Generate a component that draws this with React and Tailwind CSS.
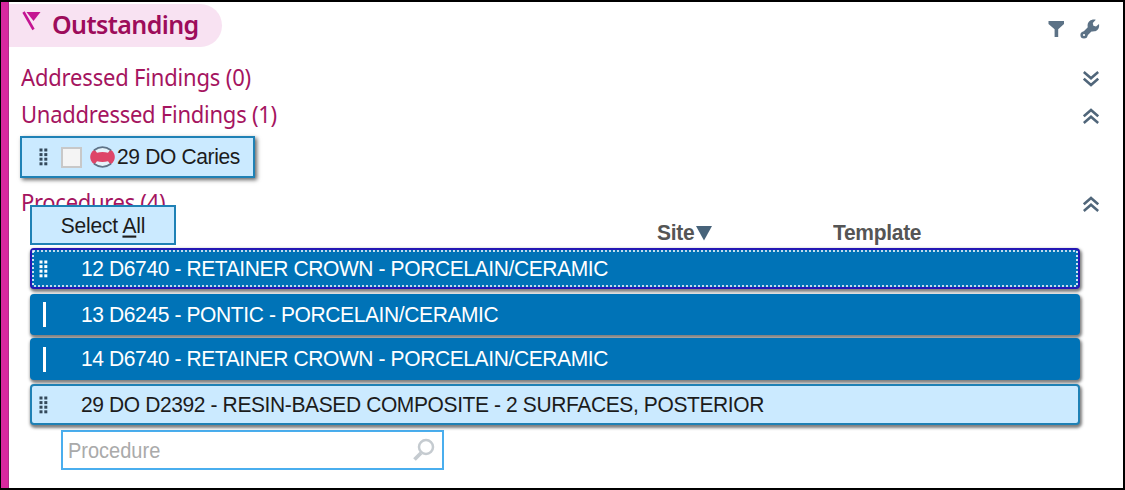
import React from "react";

const procedures = [
  { label: "12 D6740 - RETAINER CROWN - PORCELAIN/CERAMIC", state: "focused", handle: "grip", box: "h-[41px] mb-[5px]" },
  { label: "13 D6245 - PONTIC - PORCELAIN/CERAMIC", state: "selected", handle: "bar", box: "h-[41px] mb-[3px]" },
  { label: "14 D6740 - RETAINER CROWN - PORCELAIN/CERAMIC", state: "selected", handle: "bar", box: "h-[42px] mb-[4px]" },
  { label: "29 DO D2392 - RESIN-BASED COMPOSITE - 2 SURFACES, POSTERIOR", state: "idle", handle: "grip", box: "h-[41px]" },
];

const rowStyles = {
  focused: "bg-[#0073b7] text-white border-2 border-[#2518b5]",
  selected: "bg-[#0073b7] text-white border-2 border-[#0073b7]",
  idle: "bg-[#cbeaff] text-[#1c1c1c] border-2 border-[#1f81b5]",
};

function Grip({ className }) {
  return (
    <svg className={className} width="9" height="18" viewBox="0 0 9 18" fill="currentColor">
      {[0.5, 5.3].map((x) =>
        [0.5, 5.1, 9.7, 14.3].map((y) => <rect key={`${x}-${y}`} x={x} y={y} width="3" height="3" />)
      )}
    </svg>
  );
}

function Chevrons({ up = false }) {
  return (
    <svg className={up ? "" : "rotate-180"} width="16" height="16" viewBox="0 0 16 16" fill="none" stroke="#50667a" strokeWidth="2.6">
      <path d="M.8 8.3 8 2l7.200 6.300M.8 15 8 8.700 15.200 15" />
    </svg>
  );
}

function Section({ title, up, className, spacing }) {
  return (
    <div className={`flex justify-between pl-[12px] pr-[24px] ${className}`}>
      <h2 className={`h-[30px] origin-center scale-y-[1.06] whitespace-nowrap text-[22px] leading-[29px] text-[#a5145f] ${spacing}`}>{title}</h2>
      <div className="pt-[8px]">
        <Chevrons up={up} />
      </div>
    </div>
  );
}

function ProcedureRow({ label, state, handle, box }) {
  return (
    <div className={`relative flex w-[1050px] items-center rounded-[4px] shadow-[1px_2px_3px_1px_rgba(0,0,0,0.5)] ${box} ${rowStyles[state]}`}>
      {state === "focused" && (
        <svg className="absolute inset-0 h-full w-full" fill="none">
          <rect x="1" y="1" width="1044" height="35" stroke="white" strokeWidth="1.600" strokeDasharray="2 2" />
        </svg>
      )}
      <div className="flex w-[49px] pl-[7px]">
        {handle === "grip" ? (
          <Grip className={state === "idle" ? "text-[#34495b]" : "text-white"} />
        ) : (
          <span className="ml-[3.500px] h-[25px] w-[3px] bg-white" />
        )}
      </div>
      <span className="origin-center scale-y-[1.06] whitespace-nowrap text-[21px] leading-6 tracking-[-0.390px]">{label}</span>
    </div>
  );
}

export default function App() {
  return (
    <div className="flex h-[490px] w-[1125px] overflow-hidden border-2 border-l-[1px] border-black bg-white font-['Liberation_Sans',sans-serif]">
      <div className="w-[8px] shrink-0 border-r border-[#b22b88] bg-[#d8289f]" />
      <main className="flex w-[1114px] flex-col">
        <header className="flex h-[61px] justify-between pr-[23px] pt-[2px] font-['Noto_Sans',sans-serif]">
          <div className="flex h-[43px] w-[213px] rounded-r-[22px] bg-[#f8e2f2] pl-[13px]">
            <svg className="mt-[7px]" width="19" height="20" viewBox="0 0 19 20">
              <path d="M1.500 1 11.500 18.500" stroke="#c41592" strokeWidth="2.600" />
              <path d="M4.500 1H18.500L11.500 10Z" fill="#c41592" />
            </svg>
            <h1 className="ml-[11px] origin-center scale-y-[1.04] text-[25px] font-semibold leading-[40px] tracking-[-0.600px] text-[#9d0c5b]">Outstanding</h1>
          </div>
          <div className="flex gap-[15px] pt-[14px] text-[#5c7286]">
            <svg className="mt-[3px]" width="17" height="17" viewBox="0 0 17 17" fill="currentColor">
              <path d="M.5 0h15.500v3L10.200 8.200V16H6.600V8.200L.5 3Z" />
            </svg>
            <svg className="mt-[1px]" width="20" height="20" viewBox="0 0 20 20">
              <path d="M4 16 11.500 8.500" stroke="currentColor" strokeWidth="5.500" />
              <circle cx="4" cy="16" r="3.600" fill="currentColor" />
              <circle cx="4" cy="16" r="1.100" fill="white" />
              <path d="M15.800.8C12-.3 8 2 7.600 6c-.4 4.500 3.400 7 6.700 6.300 3.300-.4 5.400-3.500 4.700-7.300L16 7.400l-2.600-.7-.6-2.800Z" fill="currentColor" />
            </svg>
          </div>
        </header>

        <div className="font-['Noto_Sans',sans-serif]">
          <Section title="Addressed Findings (0)" className="h-[37px]" spacing="tracking-[-0.180px]" />
          <Section title="Unaddressed Findings (1)" up className="h-[36px]" spacing="tracking-[-0.250px]" />
        </div>

        <div className="ml-[11px] flex h-[42px] w-[235px] items-center border-2 border-[#1f81b5] bg-[#cbeaff] pl-[17px] text-[#1c1c1c] shadow-[2px_2px_4px_rgba(0,0,0,0.6)]">
          <Grip className="text-[#34495b]" />
          <span className="ml-[13px] h-[21px] w-[21px] border-2 border-[#c8c8c8] bg-[#f4f4f4]" />
          <svg className="ml-[8px]" width="25" height="22" viewBox="0 0 25 22">
            <ellipse cx="12.500" cy="11" rx="12.300" ry="10" fill="#de4568" />
            <path d="M4.500 3.500Q12.500-1.500 20.500 3.500L18 6.800Q12.500 5.400 7 6.800ZM4.500 18.500Q12.500 23.500 20.500 18.500L18 15.200Q12.500 16.600 7 15.200Z" fill="#e5f3fb" />
            <path d="M4 4.200Q12.500-2 21 4.200M4 17.800Q12.500 24 21 17.800" fill="none" stroke="#5f7488" strokeWidth="1.800" />
          </svg>
          <span className="ml-[2px] origin-center scale-y-[1.06] whitespace-nowrap text-[21px] leading-6 tracking-[-0.350px]">29 DO Caries</span>
        </div>

        <Section title="Procedures (4)" up className="mt-[10px] h-[17px] font-['Noto_Sans',sans-serif]" spacing="tracking-[-0.300px]" />

        <div className="ml-[21px] flex h-[43px] text-[21px] text-[#555]">
          <button className="relative z-10 h-[40px] w-[146px] border-2 border-[#1f81b5] bg-[#cbeaff] pt-px leading-[36px] tracking-[-0.200px] text-[#1c1c1c]">
            <span className="inline-block scale-y-[1.06]">
              Select <span className="underline decoration-2 underline-offset-2">A</span>ll
            </span>
          </button>
          <div className="ml-[481px] flex w-[176px] pt-[16px] font-bold leading-6 tracking-[-0.300px]">
            <span className="h-6 scale-y-[1.04]">Site</span>
            <svg className="ml-[2px] mt-[5px]" width="16" height="15" viewBox="0 0 16 15">
              <path d="M0 0h16L8 14.500Z" fill="#47637a" />
            </svg>
          </div>
          <div className="mt-[16px] h-6 scale-y-[1.04] font-bold leading-6 tracking-[-0.300px]">Template</div>
        </div>

        <div className="ml-[21px] flex flex-col">
          {procedures.map((p) => (
            <ProcedureRow key={p.label} {...p} />
          ))}
        </div>

        <div className="ml-[52px] mt-[5px] flex h-[40px] w-[383px] items-center justify-between border-2 border-[#4aaeee] bg-white pl-[5px] pr-[7px]">
          <span className="mt-px scale-y-[1.06] text-[20px] text-[#aaa]">Procedure</span>
          <svg width="22" height="24" viewBox="0 0 22 24" fill="none" stroke="#c5cbd0">
            <circle cx="13" cy="9" r="7" strokeWidth="2.500" />
            <path d="M8 15 1.500 21.500" strokeWidth="3.800" />
          </svg>
        </div>
      </main>
    </div>
  );
}
